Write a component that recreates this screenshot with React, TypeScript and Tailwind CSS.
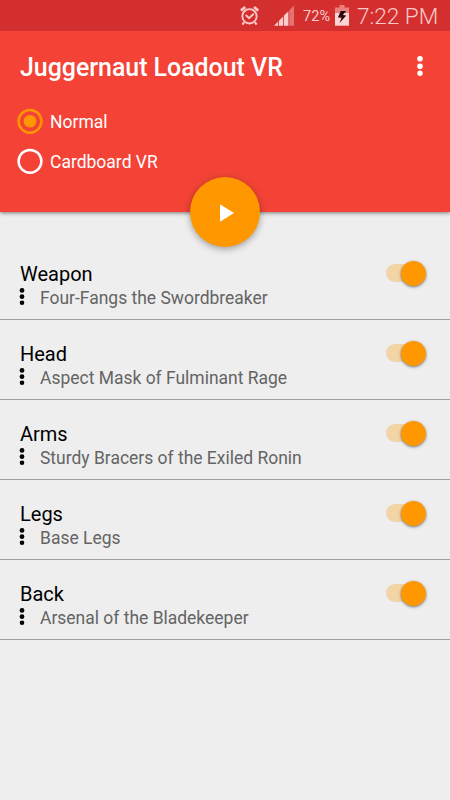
import React from "react";

const items = [
  { title: "Weapon", value: "Four-Fangs the Swordbreaker" },
  { title: "Head", value: "Aspect Mask of Fulminant Rage" },
  { title: "Arms", value: "Sturdy Bracers of the Exiled Ronin" },
  { title: "Legs", value: "Base Legs" },
  { title: "Back", value: "Arsenal of the Bladekeeper" },
];

function AlarmIcon() {
  return (
    <svg className="ml-[239px] mt-[5px] h-[22px] w-[20px] shrink-0" viewBox="0 0 20 22" fill="none" stroke="#fbc8c8">
      <circle cx="10.5" cy="11.3" r="7.2" strokeWidth="1.9" />
      <path d="M2 5.6 6.2 2M19.2 5.6 15 2" strokeWidth="2.8" />
      <path d="M6.8 10l3.2 3.1 4.8-4.4" strokeWidth="1.9" />
      <path d="M5 17.4l-1.6 2.2M16 17.4l1.6 2.2" strokeWidth="2.2" />
    </svg>
  );
}

function SignalIcon() {
  return (
    <svg className="ml-[15px] mt-[5px] h-[21px] w-[20px] shrink-0" viewBox="0 0 20 21">
      <path d="M0 20.7 4.2 16.5v4.2zM5 20.7v-5L9.2 11.4v9.3zM10 20.7V10.6L14.4 6.2v14.5z" fill="#fbcaca" />
      <path d="M15.3 20.7V5.2L20 .5v20.2z" fill="#e57373" />
    </svg>
  );
}

function BatteryIcon() {
  return (
    <svg className="ml-[3px] mt-[5px] h-[21px] w-[14px] shrink-0" viewBox="0 0 14 21">
      <path d="M4.5 0h5v2.6H14V8H0V2.6h4.5z" fill="#e98080" />
      <path d="M0 8h14v12.7H0z" fill="#fcd4d4" />
      <path d="M5.6 6 3 12.4l3.6.4L4.5 18l6.8-7.4-3.5-.7L11.2 6z" fill="#2c0909" />
    </svg>
  );
}

function Dots({ className }: { className: string }) {
  return (
    <svg className={className} viewBox="0 0 6 20" fill="currentColor">
      <circle cx="3" cy="2.8" r="2.8" />
      <circle cx="3" cy="10.2" r="2.8" />
      <circle cx="3" cy="17.3" r="2.7" />
    </svg>
  );
}

function Radio({ label, checked }: { label: string; checked?: boolean }) {
  return (
    <label className="flex h-10 items-center pl-[17px]">
      <svg className={checked ? "h-[26px] w-[26px] text-[#ff9800]" : "h-[26px] w-[26px] text-white"} viewBox="0 0 26 26">
        <circle cx="13" cy="13.3" r="11.4" fill="none" stroke="currentColor" strokeWidth="2.5" />
        {checked && <circle cx="13" cy="13.3" r="6.3" fill="currentColor" />}
      </svg>
      <span className="ml-[7px] pt-[2px] text-[17.5px] leading-5 text-white">{label}</span>
    </label>
  );
}

function Toggle() {
  return (
    <div className="mr-[25px] mt-5 flex h-[26px] w-[39px] items-center">
      <div className="flex h-[18px] w-[36px] items-center justify-end rounded-full bg-[#f3d4a6]">
        <div className="-mr-1 h-[25px] w-[25px] shrink-0 rounded-full bg-[#ff9800] shadow-[0_1px_3px_rgba(0,0,0,0.5)]" />
      </div>
    </div>
  );
}

export default function App() {
  return (
    <div className="flex h-[800px] w-[450px] flex-col overflow-hidden bg-[#eeeeee] font-[Roboto,sans-serif]">
      <div className="relative z-10 flex h-[31px] shrink-0 bg-[#d32f2f] text-[#fbcaca]">
        <AlarmIcon />
        <SignalIcon />
        <span className="ml-[9px] mt-[7px] w-[29px] whitespace-nowrap text-[14.5px] leading-5 tracking-[0.1px]">72%</span>
        <BatteryIcon />
        <span className="ml-[8px] mt-[3px] whitespace-nowrap text-[22.6px] font-light leading-[27px]">7:22 PM</span>
      </div>
      <header className="relative h-[181px] shrink-0 bg-[#f44336] shadow-[0_1px_4px_rgba(0,0,0,0.5)]">
        <div className="flex h-[70px] items-center justify-between pl-5 pr-[27px]">
          <h1 className="pt-1 text-[24.9px] font-medium leading-[30px] text-white">Juggernaut Loadout VR</h1>
          <Dots className="h-5 w-[6px] text-white" />
        </div>
        <Radio label="Normal" checked />
        <Radio label="Cardboard VR" />
        <button className="absolute bottom-[-35px] left-[190px] flex h-[70px] w-[70px] items-center justify-center rounded-full bg-[#ff9800] shadow-[0_2px_7px_rgba(0,0,0,0.35)]">
          <svg className="ml-[3px] mt-px h-[18px] w-[14px]" viewBox="0 0 14 18">
            <path d="M0 .3 14 9 0 17.7z" fill="#fff" />
          </svg>
        </button>
      </header>
      <main className="mt-7">
        {items.map((item) => (
          <div key={item.title} className="flex h-20 justify-between border-b border-[#a0a0a0]">
            <div>
              <div className="ml-5 mt-[22px] text-[20px] leading-6 text-black">{item.title}</div>
              <div className="ml-[18.5px] flex h-[22px] items-center">
                <Dots className="-mt-px h-[17px] w-[6px] text-black" />
                <span className="ml-[15.5px] pt-[2px] text-[17.48px] leading-[22px] text-[#646464]">{item.value}</span>
              </div>
            </div>
            <Toggle />
          </div>
        ))}
      </main>
    </div>
  );
}
